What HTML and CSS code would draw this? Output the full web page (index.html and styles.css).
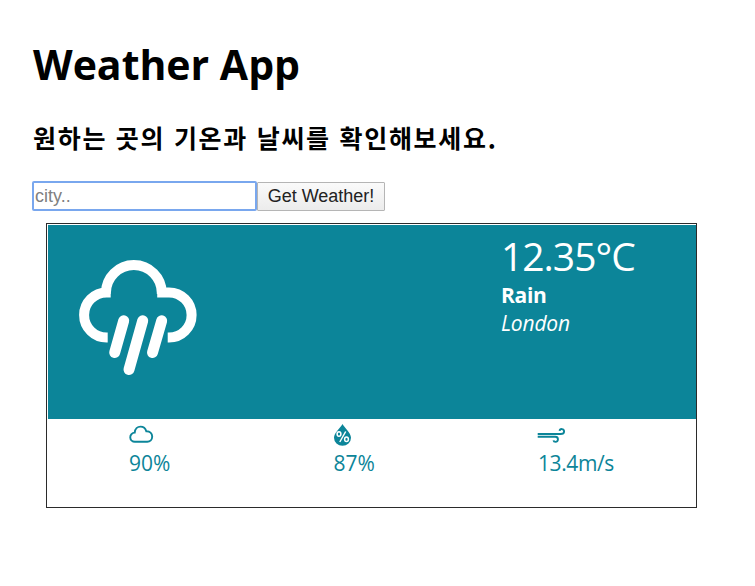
FILE: index.html
```html
<!DOCTYPE html>
<html lang="ko">
<head>
<meta charset="utf-8">
<title>Weather App</title>
<link rel="stylesheet" href="styles.css">
</head>
<body>
<main class="app">
  <h1 class="title">Weather App</h1>
  <h2 class="subtitle">원하는 곳의 기온과 날씨를 확인해보세요.</h2>
  <form class="search">
    <input class="city" type="text" placeholder="city..">
    <button class="submit" type="button">Get Weather!</button>
  </form>
  <section class="card">
    <div class="current">
      <svg class="rain" viewBox="75 255 126 125">
        <path d="M107.700 337.600h-1a22.600 22.600 0 0 1 0-45.200h4M167.700 337.600h1.300a22.600 22.600 0 0 0 0-45.200h-11.800M105.900 294v-1a27.950 27.950 0 0 1 55.900 0v1" stroke-width="10"/>
        <path d="M123.700 320.800l-9 31.700M142.700 320.800L129 369.500M161.700 320.800l-9.200 31.700" stroke-width="11" stroke-linecap="round"/>
      </svg>
      <div class="summary">
        <div class="temp">12.35°C</div>
        <div class="condition">Rain</div>
        <div class="place">London</div>
      </div>
    </div>
    <div class="details">
      <div class="detail">
        <svg class="icon" viewBox="0 0 30 22">
          <path d="M6 17.800a4.600 4.600 0 0 1-.3-9.200C6 5 8.500 2.600 11.500 2.600c3 0 5 1.800 5.800 4.700 3.500-.2 5.900 2 5.900 5.200 0 3-2.200 5.300-5 5.300z" fill="none" stroke="currentColor" stroke-width="1.900"/>
        </svg>
        <span class="value">90%</span>
      </div>
      <div class="detail">
        <svg class="icon" viewBox="0 0 30 22">
          <path d="M8.500 0C10.500 3.500 17 9 17 13.800a8.500 8 0 0 1-17 0C0 9 6.500 3.500 8.500 0z" fill="currentColor"/>
          <g fill="none" stroke="#fff" stroke-width="1.500"><ellipse cx="5" cy="10" rx="1.900" ry="2.300"/><ellipse cx="12.500" cy="15.300" rx="1.900" ry="2.300"/><path d="M11.700 7.500L5.800 18"/></g>
        </svg>
        <span class="value">87%</span>
      </div>
      <div class="detail">
        <svg class="icon" viewBox="0 0 30 22">
          <path d="M-.3 10h22.800c2.200 0 3.600-1 3.600-2.600 0-2.900-4.200-3.100-4.500-.5M-.3 12.800h17.600c3.500 0 3.500 5.100.2 5.100-1.200 0-1.900-.6-2-1.600" fill="none" stroke="currentColor" stroke-width="1.900"/>
        </svg>
        <span class="value wind">13.4m/s</span>
      </div>
    </div>
  </section>
</main>
</body>
</html>
```
FILE: styles.css
```css
* { box-sizing: border-box; }
body { margin: 0; background: #fff; color: #000; font-family: "Open Sans", "Noto Sans", sans-serif; }
.app { padding: 35px 58px 0 33px; }
.title { margin: 0; height: 58px; font-size: 41px; line-height: 58px; font-weight: 700; white-space: nowrap; }
.subtitle { margin: 26px 0 0; height: 36px; font: 700 25px/36px "Noto Sans CJK KR", sans-serif; letter-spacing: 1.7px; white-space: nowrap; }
.search { display: flex; align-items: center; height: 30px; margin: 26px 0 0 -1px; }
.city { width: 225px; height: 30px; padding: 0 1px; border: 2px solid #79a7ee; border-radius: 2px; outline: 0; font: 18px "Liberation Sans", sans-serif; background: #fff; }
.city::placeholder { color: #808080; }
.submit { width: 128px; height: 29px; padding: 0; border: 1px solid #b5b5b5; border-radius: 1px; background: linear-gradient(#fafafa, #ececec); color: #222; font: 18px "Liberation Sans", sans-serif; white-space: nowrap; }
.card { width: 651px; height: 285px; margin: 12px 0 0 13px; border: 1px solid #2b2b2b; padding: 1px 0 0 1px; }
.current { display: flex; justify-content: space-between; height: 194px; padding: 30px 0 0 27px; background: #0c8599; color: #fff; }
.rain { width: 126px; height: 125px; fill: none; stroke: #fff; }
.summary { width: 195px; margin-top: -24px; }
.temp { height: 50px; font-size: 39px; line-height: 50px; font-weight: 400; letter-spacing: -1px; }
.condition { height: 28px; font-size: 21px; line-height: 28px; font-weight: 700; letter-spacing: -.3px; }
.place { height: 28px; font-size: 21px; line-height: 28px; font-style: italic; letter-spacing: -.2px; }
.details { display: grid; grid-template-columns: repeat(3, 204.5px); padding: 5px 0 0 81px; color: #0c8599; }
.detail { display: flex; flex-direction: column; }
.icon { width: 30px; height: 22px; overflow: visible; }
.value { height: 28px; margin-top: 3px; font-size: 21px; line-height: 28px; white-space: nowrap; }
.wind { letter-spacing: -.4px; }
```
